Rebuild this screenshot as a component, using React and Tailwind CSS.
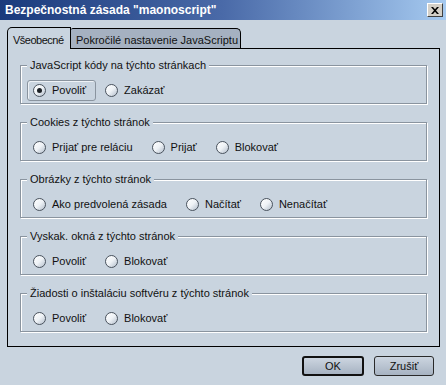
import React from "react";

const groups = [
  { title: "JavaScript kódy na týchto stránkach", options: ["Povoliť", "Zakázať"], checked: 0, focus: 0 },
  { title: "Cookies z týchto stránok", options: ["Prijať pre reláciu", "Prijať", "Blokovať"] },
  { title: "Obrázky z týchto stránok", options: ["Ako predvolená zásada", "Načítať", "Nenačítať"] },
  { title: "Vyskak. okná z týchto stránok", options: ["Povoliť", "Blokovať"] },
  { title: "Žiadosti o inštaláciu softvéru z týchto stránok", options: ["Povoliť", "Blokovať"] },
];

function Radio({ checked }) {
  return (
    <span className="w-[13px] h-[13px] shrink-0 rounded-full border border-[#4a535e] bg-linear-to-br from-white via-[#eef2f6] to-[#b4bfcc] flex items-center justify-center">
      {checked && <span className="w-[5px] h-[5px] rounded-full bg-[#1c2126]" />}
    </span>
  );
}

function Option({ label, checked, focus }) {
  return (
    <label
      className={`flex items-center h-[21px] pl-[5px] pr-[9px] gap-[6px] rounded-[3px] border ${
        focus ? "border-[#8a949f] shadow-[inset_1px_1px_0_#eef2f6]" : "border-transparent"
      }`}
    >
      <Radio checked={checked} />
      <span>{label}</span>
    </label>
  );
}

function Group({ title, options, checked, focus }) {
  return (
    <fieldset className="mx-[12px] pl-[6px] pt-[8px] pb-[2px] border border-[#8a949f] shadow-[inset_1px_1px_0_#ffffff,1px_1px_0_#ffffff]">
      <legend className="px-[3px] leading-[14px] bg-[#c9d4df]">{title}</legend>
      <div className="flex gap-[3px]">
        {options.map((o, i) => (
          <Option key={i} label={o} checked={checked === i} focus={focus === i} />
        ))}
      </div>
    </fieldset>
  );
}

export default function App() {
  return (
    <div
      className="w-[446px] h-[385px] bg-[#c9d4df] text-[11px] text-[#111] flex flex-col overflow-hidden"
      style={{ fontFamily: '"Liberation Sans", Arial, sans-serif' }}
    >
      <div className="h-[20px] shrink-0 flex items-center justify-between pl-[5px] pr-[3px] bg-linear-to-r from-[#1a3a7c] via-[#4a6aa8] to-[#a6caf0]">
        <span className="text-white font-bold text-[12px] leading-none">Bezpečnostná zásada "maonoscript"</span>
        <button className="w-[16px] h-[14px] bg-[#d4d0c8] border border-t-white border-l-white border-r-[#404040] border-b-[#404040] flex items-center justify-center">
          <svg width="8" height="7" viewBox="0 0 8 7">
            <path d="M0 0h2l2 2.2L6 0h2L5 3.5 8 7H6L4 4.8 2 7H0l3-3.5z" fill="#000" />
          </svg>
        </button>
      </div>

      <div className="mt-[7px] ml-[7px] flex items-end h-[22px]">
        <div className="relative z-10 w-[64px] h-[22px] pl-[5px] pt-[4px] bg-[#c9d4df] border-l border-t border-r border-black rounded-tl-[5px] tracking-[-0.5px] whitespace-nowrap">
          Všeobecné
        </div>
        <div className="w-[170px] h-[21px] pl-[5px] pt-[3px] bg-[#a5b1c1] border-t border-r border-black rounded-tr-[5px] rounded-tl-[2px] whitespace-nowrap">
          Pokročilé nastavenie JavaScriptu
        </div>
      </div>

      <div className="-mt-[1px] ml-[7px] w-[433px] h-[299px] border border-black pt-[9px] flex flex-col gap-[11px]">
        {groups.map((g, i) => (
          <Group key={i} {...g} />
        ))}
      </div>

      <div className="mt-[9px] flex justify-end gap-[10px] pr-[12px]">
        <button className="w-[62px] h-[20px] rounded-[3px] border-2 border-[#111] bg-linear-to-b from-[#ccd5e0] to-[#a7b3c2]">
          OK
        </button>
        <button className="w-[60px] h-[20px] rounded-[3px] border border-[#2a2a2a] bg-linear-to-b from-[#ccd5e0] to-[#a7b3c2]">
          Zrušiť
        </button>
      </div>
    </div>
  );
}
